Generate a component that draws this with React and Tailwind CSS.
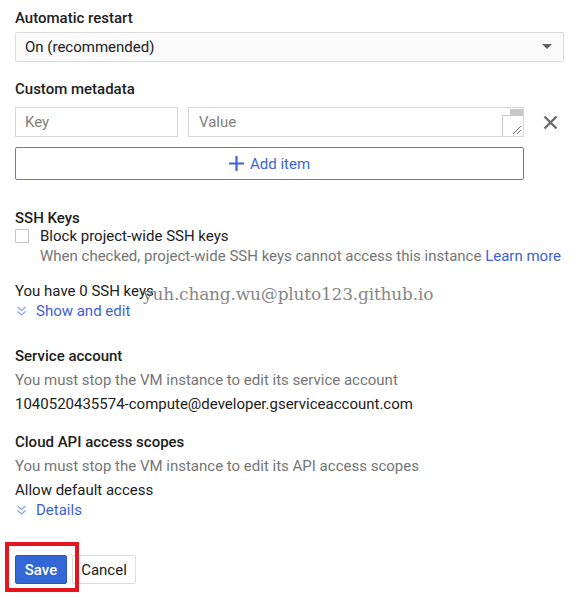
import React from "react";

function DoubleChevron() {
  return (
    <svg width="11" height="12" viewBox="0 0 11 12" className="shrink-0">
      <path d="M1.5 2 L5.5 5.5 L9.5 2" fill="none" stroke="#8ea3e6" strokeWidth="1.3" />
      <path d="M1.5 6.5 L5.5 10 L9.5 6.5" fill="none" stroke="#8ea3e6" strokeWidth="1.3" />
    </svg>
  );
}

export default function App() {
  return (
    <div
      className="relative w-[577px] h-[597px] bg-white text-[15px] leading-[20px] text-[#212121] px-[15px] pt-[8px] overflow-hidden"
      style={{ fontFamily: "Roboto, 'Liberation Sans', sans-serif" }}
    >
      {/* Automatic restart */}
      <div className="font-medium">Automatic restart</div>
      <div className="mt-[4px] w-[549px] h-[30px] border border-[#dadada] bg-[#fafafa] rounded-[2px] flex items-center justify-between pl-[9px] pr-[11px] pb-[1px]">
        <span>On (recommended)</span>
        <svg width="10" height="5" viewBox="0 0 10 5">
          <path d="M0 0 L10 0 L5 5 Z" fill="#616161" />
        </svg>
      </div>

      {/* Custom metadata */}
      <div className="mt-[17px] font-medium">Custom metadata</div>
      <div className="mt-[8px] flex items-center">
        <div className="w-[163px] h-[30px] border border-[#d6d6d6] flex items-center pl-[9px] text-[#808080]">
          Key
        </div>
        <div className="relative ml-[10px] w-[336px] h-[30px] border border-[#d6d6d6] flex items-center pl-[10px] text-[#808080]">
          Value
          <div className="absolute right-0 top-[1px] w-[13px] h-[6px] bg-[#c8c8c8]" />
          <div className="absolute right-0 top-[7px] bottom-0 w-[21px] border-l border-t border-[#c8c8c8]" />
          <svg className="absolute right-[1px] bottom-[1px]" width="10" height="10" viewBox="0 0 10 10">
            <path d="M9 1 L1 9 M9 5 L5 9" stroke="#707070" strokeWidth="1" />
          </svg>
        </div>
        <svg className="ml-[19px]" width="15" height="15" viewBox="0 0 15 15">
          <path d="M1.5 1.5 L13.5 13.5 M13.5 1.5 L1.5 13.5" stroke="#6b6b6b" strokeWidth="2.4" />
        </svg>
      </div>
      <div className="mt-[10px] w-[509px] h-[33px] border border-solid border-[color:#4f7fe0] rounded-[2px] flex items-center justify-center text-[#3d63d6]">
        <svg width="15" height="15" viewBox="0 0 15 15" className="mr-[6px]">
          <path d="M7.5 0 V15 M0 7.5 H15" stroke="#3d63d6" strokeWidth="2.2" />
        </svg>
        <span>Add item</span>
      </div>

      {/* SSH Keys */}
      <div className="mt-[28px] font-medium">SSH Keys</div>
      <div className="mt-[-2px] flex">
        <div className="mt-[3px] w-[14px] h-[14px] border border-[#c4c4c4] rounded-[1px] bg-white shrink-0" />
        <div className="ml-[11px]">
          <div>Block project-wide SSH keys</div>
          <div className="text-[#757575] whitespace-nowrap">
            When checked, project-wide SSH keys cannot access this instance{" "}
            <span className="text-[#3d5fd6]">Learn more</span>
          </div>
        </div>
      </div>

      <div className="mt-[15px]">You have 0 SSH keys</div>
      <div className="flex items-center text-[#3d5fd6]">
        <span className="ml-[1px] mr-[9px] flex">
          <DoubleChevron />
        </span>
        <span>Show and edit</span>
      </div>

      {/* Service account */}
      <div className="mt-[25px] font-medium">Service account</div>
      <div className="mt-[4px] text-[#757575]">You must stop the VM instance to edit its service account</div>
      <div className="mt-[4px]">1040520435574-compute@developer.gserviceaccount.com</div>

      {/* Cloud API */}
      <div className="mt-[18px] font-medium">Cloud API access scopes</div>
      <div className="mt-[4px] text-[#757575]">You must stop the VM instance to edit its API access scopes</div>
      <div className="mt-[4px]">Allow default access</div>
      <div className="flex items-center text-[#3d5fd6]">
        <span className="ml-[1px] mr-[9px] flex">
          <DoubleChevron />
        </span>
        <span>Details</span>
      </div>

      {/* Buttons */}
      <div className="relative mt-[35px] flex items-center">
        <div className="w-[52px] h-[29px] bg-[#3367d6] border border-[#2a56c0] rounded-[2px] text-white font-medium flex items-center justify-center">
          Save
        </div>
        <div className="ml-[5px] w-[64px] h-[29px] bg-white border border-[#dcdcdc] rounded-[2px] text-[#212121] flex items-center justify-center">
          Cancel
        </div>
        <div className="absolute left-[-10px] top-[-13px] w-[74px] h-[50px] border-[4px] border-[#e5141d]" />
      </div>

      {/* Watermark */}
      <div
        className="absolute left-[143px] top-[282px] text-[17px] leading-[24px] tracking-[-0.2px] text-[#7a7a7a] opacity-90 whitespace-nowrap pointer-events-none"
        style={{ fontFamily: "'DejaVu Serif', 'Liberation Serif', serif" }}
      >
        yuh.chang.wu@pluto123.github.io
      </div>
    </div>
  );
}
